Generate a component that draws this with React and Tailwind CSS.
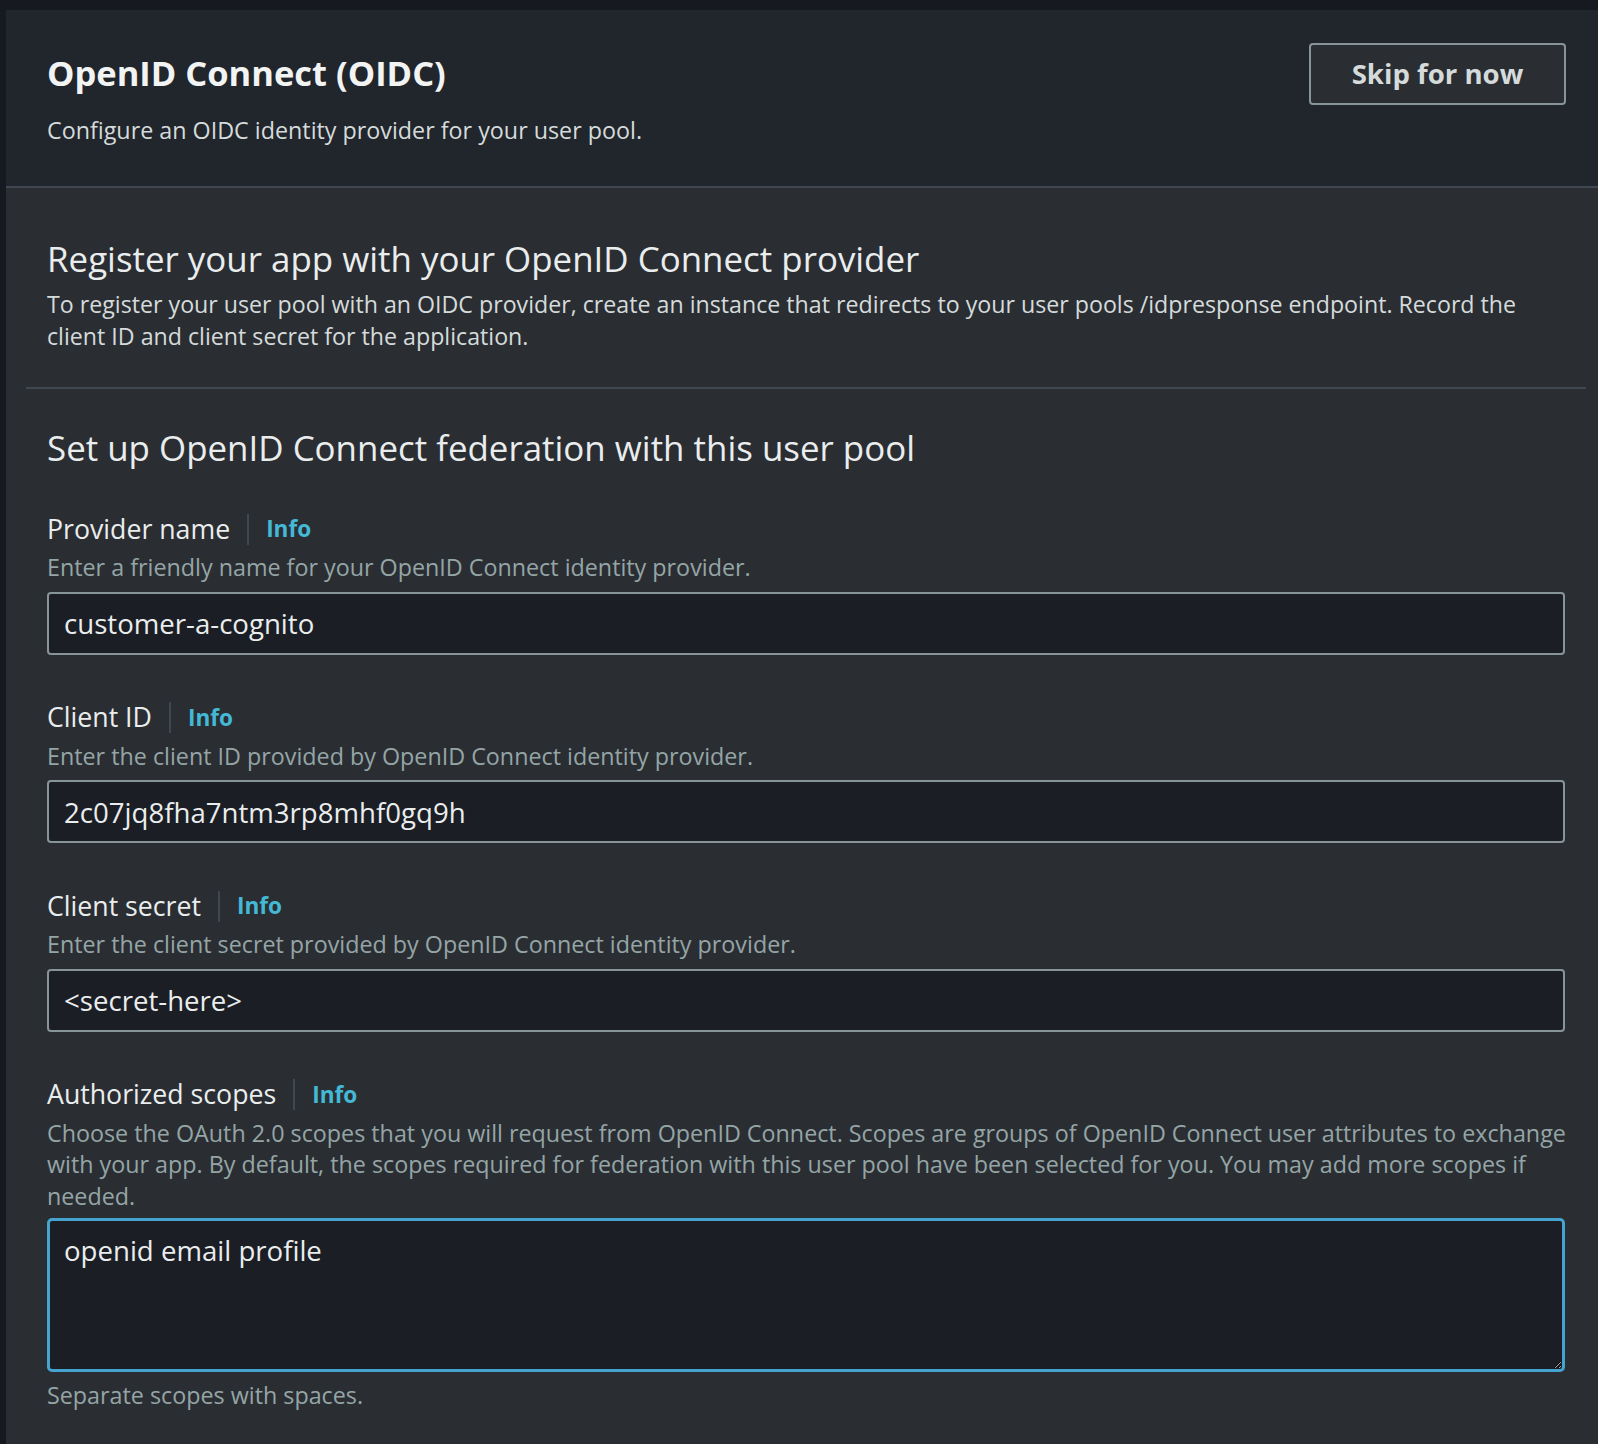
import React from 'react';

const Field = ({ label, children, desc, descGap = 'mt-[8px]', descClass = '' }) => (
    <div>
        <div className="flex h-[32px] items-center">
            <span className="text-[26.7px] text-[#eaeded]">{label}</span>
            <span className="mx-[17px] h-[31px] w-[2px] bg-[#414750]"></span>
            <span className="text-[22.6px] font-bold text-[#44b9d6]">Info</span>
        </div>
        <p className={`mt-[7px] text-[23.3px] leading-[31.5px] text-[#95a5a6] ${descClass}`}>{desc}</p>
        <div className={descGap}>{children}</div>
    </div>
);

const TextInput = ({ value }) => (
    <input
        readOnly
        value={value}
        className="block h-[63px] w-full rounded-[4px] border-2 border-[#879596] bg-[#1b1e25] px-[15px] text-[27.6px] text-[#eaeded] outline-none"
    />
);

const App = () => {
    return (
        <div className="min-h-[1444px] bg-[#16191f] pl-[6px] pt-[10px] font-['Open_Sans',sans-serif]">
            <div className="min-h-[1434px] bg-[#2a2e33]">
                {/* Header */}
                <header className="flex h-[178px] items-start justify-between border-b-2 border-[#414750] bg-[#21252c] pl-[41px] pr-[32px]">
                    <div className="pt-[43px]">
                        <h1 className="text-[34.5px] font-bold leading-[40px] text-[#f2f3f3]">OpenID Connect (OIDC)</h1>
                        <p className="mt-[21px] text-[23.3px] leading-[32px] text-[#d5dbdb]">
                            Configure an OIDC identity provider for your user pool.
                        </p>
                    </div>
                    <button className="mt-[33px] h-[62px] w-[257px] rounded-[4px] border-2 border-[#879596] bg-[#2a2e33] text-[27.6px] font-bold text-[#d5dbdb]">
                        Skip for now
                    </button>
                </header>

                <div className="pl-[20px] pr-[12px] pb-[40px]">
                    {/* Register section */}
                    <section className="px-[21px] pt-[51px]">
                        <h2 className="text-[34.9px] leading-[40px] text-[#eaeded]">Register your app with your OpenID Connect provider</h2>
                        <p className="mt-[10px] text-[23.2px] leading-[31.5px] text-[#d5dbdb]">
                            To register your user pool with an OIDC provider, create an instance that redirects to your user pools /idpresponse endpoint. Record the
                            <br />
                            client ID and client secret for the application.
                        </p>
                    </section>

                    <div className="mt-[35px] h-[2px] bg-[#414750]"></div>

                    {/* Federation section */}
                    <section className="px-[21px] pt-[39px]">
                        <h2 className="text-[34.9px] leading-[40px] text-[#eaeded]">Set up OpenID Connect federation with this user pool</h2>

                        <div className="mt-[45px] flex flex-col gap-[47px]">
                            <Field label="Provider name" desc="Enter a friendly name for your OpenID Connect identity provider.">
                                <TextInput value="customer-a-cognito" />
                            </Field>
                            <Field label="Client ID" desc="Enter the client ID provided by OpenID Connect identity provider.">
                                <TextInput value="2c07jq8fha7ntm3rp8mhf0gq9h" />
                            </Field>
                            <Field label="Client secret" desc="Enter the client secret provided by OpenID Connect identity provider.">
                                <TextInput value="<secret-here>" />
                            </Field>
                            <Field
                                label="Authorized scopes"
                                descGap="mt-[6px]"
                                descClass="whitespace-nowrap"
                                desc={
                                    <>
                                        Choose the OAuth 2.0 scopes that you will request from OpenID Connect. Scopes are groups of OpenID Connect user attributes to exchange
                                        <br />
                                        with your app. By default, the scopes required for federation with this user pool have been selected for you. You may add more scopes if
                                        <br />
                                        needed.
                                    </>
                                }
                            >
                                <textarea
                                    readOnly
                                    defaultValue="openid email profile"
                                    className="block h-[154px] w-full resize-y rounded-[5px] border-[3px] border-[#44a3cf] bg-[#1b1e25] px-[14px] pt-[13px] text-[27.6px] leading-[32px] text-[#eaeded] outline-none [color-scheme:dark]"
                                />
                                <p className="mt-[8px] text-[23.3px] leading-[31.5px] text-[#95a5a6]">Separate scopes with spaces.</p>
                            </Field>
                        </div>
                    </section>
                </div>
            </div>
        </div>
    );
};

export default App;
